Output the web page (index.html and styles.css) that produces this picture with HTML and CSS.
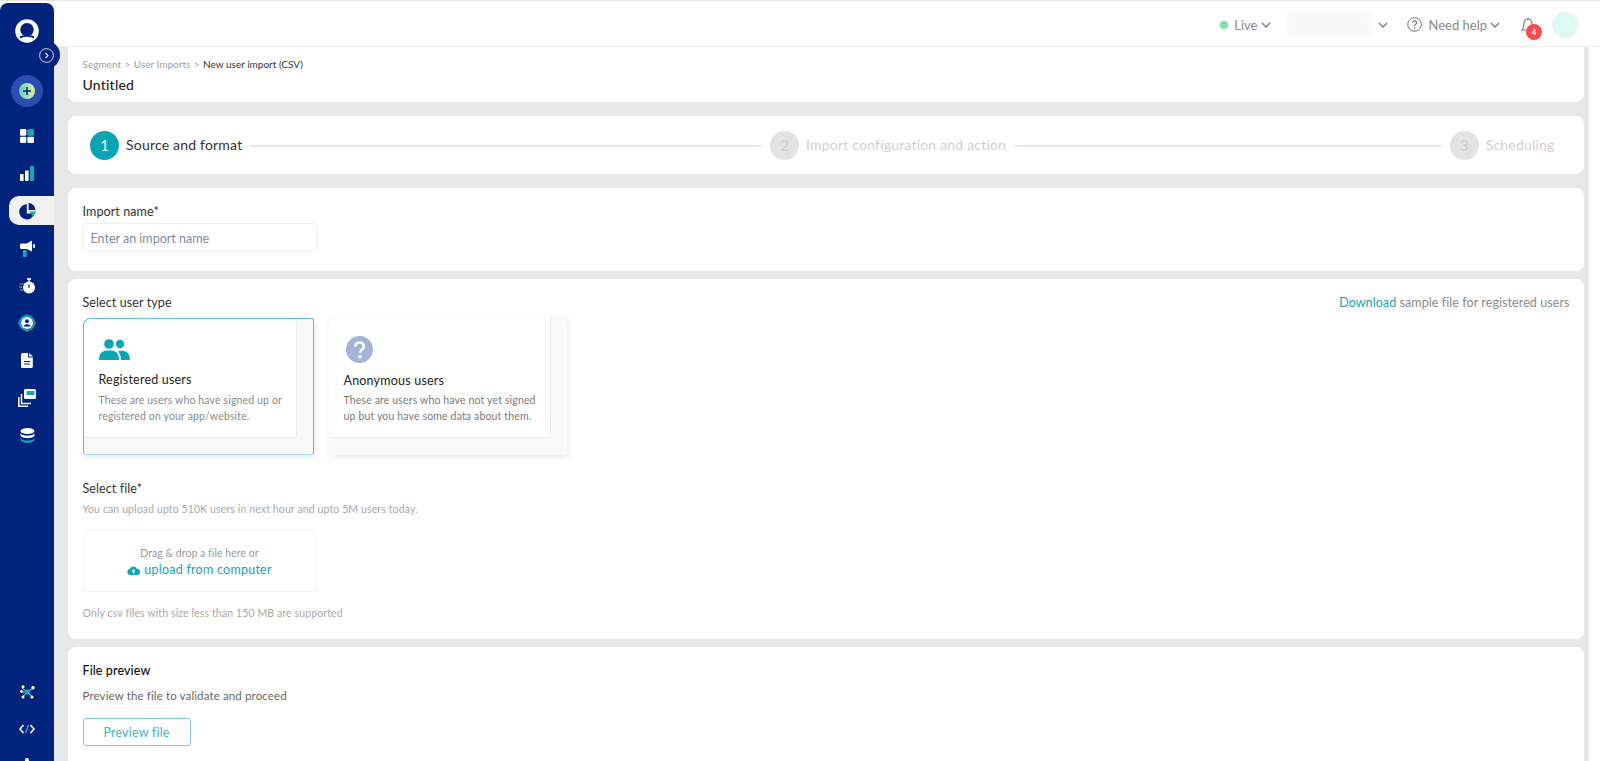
FILE: index.html
```html
<!DOCTYPE html>
<html lang="en">
<head>
<meta charset="utf-8">
<title>New user import</title>
<link rel="stylesheet" href="styles.css">
</head>
<body>
<div class="app">
  <aside class="sidebar">
    <div class="side-top">
      <div class="side-item logo">
        <svg width="24" height="24" viewBox="0 0 24 24"><circle cx="12" cy="12" r="11.800" fill="#fff"/><circle cx="12" cy="10.800" r="6.800" fill="#00247d"/><path d="M5 17.300c3-1.400 11-1.400 14 0v2H5z" fill="#00247d"/><ellipse cx="12" cy="20.500" rx="6.500" ry="2.800" fill="#fff"/></svg>
      </div>
      <button class="toggle" aria-label="Expand"><svg width="15" height="15" viewBox="0 0 15 15" fill="none" stroke="#dfe5f2"><circle cx="7.500" cy="7.500" r="6.900" stroke-width=".9"/><path d="M6.500 5 9 7.500 6.500 10" stroke-width="1.200"/></svg></button>
      <div class="add-wrap"><span class="add"><svg width="16" height="16" viewBox="0 0 18 18"><defs><linearGradient id="g" x1="0" x2="1"><stop offset="0" stop-color="#5fd0c9"/><stop offset="1" stop-color="#e3eea0"/></linearGradient></defs><circle cx="9" cy="9" r="9" fill="url(#g)"/><path d="M9 4.500v9M4.500 9h9" stroke="#00247d" stroke-width="1.700"/></svg></span></div>
      <div class="side-item"><svg width="14" height="14" viewBox="0 0 14 14"><rect width="6.300" height="6.800" rx="1.300" fill="#fff"/><rect x="7.400" width="6.600" height="6.800" rx="1.300" fill="#1ba6b4"/><rect y="7.800" width="6.300" height="6.200" rx="1.300" fill="#fff"/><rect x="7.400" y="7.800" width="6.600" height="6.200" rx="1.300" fill="#fff"/></svg></div>
      <div class="side-item"><svg width="14" height="15" viewBox="0 0 14 15"><rect y="8" width="3.600" height="7" rx=".8" fill="#fff"/><rect x="5" y="4.500" width="3.600" height="10.500" rx=".8" fill="#fff"/><rect x="10" y="0" width="4" height="15" rx=".8" fill="#1ba6b4"/></svg></div>
      <div class="side-item active"><svg width="18" height="18" viewBox="0 0 18 18"><path d="M7.800 2.200a7.600 7.600 0 1 0 7.400 9.400H7.800z" fill="#00247d"/><path d="M9.600 1a7.400 7.400 0 0 1 7 7H9.600z" fill="#00247d"/><path d="M10.500 9.600h6.700l-3 5.200z" fill="#1ba6b4"/></svg></div>
      <div class="side-item"><svg width="15" height="17" viewBox="0 0 15 17"><path d="M1.500 3.500h5.300L12 .5v11L6.800 9H1.500A1.500 1.500 0 0 1 0 7.500V5a1.500 1.500 0 0 1 1.500-1.500z" fill="#fff"/><rect x="13" y="4" width="2" height="4" rx="1" fill="#fff"/><rect x="3" y="10" width="3.600" height="7" rx=".5" fill="#1ba6b4"/></svg></div>
      <div class="side-item"><svg width="16" height="17" viewBox="0 0 16 17"><circle cx="10" cy="10.500" r="6" fill="#fff"/><rect x="8" y="1" width="4" height="1.800" rx=".5" fill="#fff"/><rect x="9.300" y="2" width="1.400" height="3" fill="#fff"/><path d="M10 7.500v3.200" stroke="#00247d" stroke-width="1.300"/><path d="M1 7h3.500M0 10h3M1 13h3.500" stroke="#8fa2d0" stroke-width="1"/></svg></div>
      <div class="side-item"><svg width="18" height="18" viewBox="0 0 18 18"><circle cx="9" cy="9" r="7.200" fill="none" stroke="#1ba6b4" stroke-width="1.800"/><path d="M9 0v2M9 16v2M0 9h2M16 9h2" stroke="#1ba6b4" stroke-width="1.400"/><circle cx="9" cy="9" r="6" fill="#fff"/><circle cx="9" cy="7.300" r="2" fill="#00247d"/><path d="M5.500 12.500c.5-3 6.500-3 7 0z" fill="#00247d"/></svg></div>
      <div class="side-item"><svg width="12" height="15" viewBox="0 0 12 15"><path d="M1.500 0H7v4.500h4.800V13.500a1.500 1.500 0 0 1-1.500 1.500H1.500A1.500 1.500 0 0 1 0 13.500v-12A1.500 1.500 0 0 1 1.500 0z" fill="#fff"/><path d="M8 0l4 3.600H8z" fill="#fff"/><path d="M3 8.500h6M3 11h6" stroke="#00247d" stroke-width="1"/></svg></div>
      <div class="side-item"><svg width="18" height="18" viewBox="0 0 18 18"><rect x="6" y="0" width="12" height="10" rx="1.500" fill="#fff"/><rect x="8.500" y="2" width="8" height="4" fill="#1ba6b4"/><path d="M3.500 5v9.500h9.500M.8 8v9.200H10" fill="none" stroke="#fff" stroke-width="1.500"/></svg></div>
      <div class="side-item"><svg width="15" height="15" viewBox="0 0 15 15"><ellipse cx="7.500" cy="3" rx="7" ry="3" fill="#fff"/><path d="M.5 5c1 3.500 13 3.500 14 0v2.500c-1 3.500-13 3.500-14 0z" fill="#fff"/><path d="M.5 10c1 3.500 13 3.500 14 0v1.500c-1 4.500-13 4.500-14 0z" fill="#1ba6b4"/></svg></div>
    </div>
    <div class="side-bottom">
      <div class="side-item"><svg width="15" height="14" viewBox="0 0 15 14"><g stroke="#fff" stroke-width=".8"><path d="M7.500 7 2 3M7.500 7 13 3M7.500 7l-5 5M7.500 7l5 5M7.500 7H1"/></g><circle cx="3" cy="1.800" r="1.500" fill="#fff"/><circle cx="13" cy="2.800" r="1.700" fill="#fff"/><circle cx="1.500" cy="6.500" r="1.400" fill="#fff"/><circle cx="3" cy="12" r="1.500" fill="#fff"/><circle cx="12" cy="12" r="1.500" fill="#fff"/><circle cx="7.500" cy="7" r="2.800" fill="#1ba6b4"/></svg></div>
      <div class="side-item"><svg width="16" height="10" viewBox="0 0 16 10" fill="none" stroke-width="1.500"><path d="M4.500 1 1 5l3.500 4M11.500 1 15 5l-3.500 4" stroke="#fff"/><path d="M9.500 1 6.500 9" stroke="#1ba6b4"/></svg></div>
      <div class="side-tail"></div>
    </div>
  </aside>

  <div class="main">
    <header class="topbar">
      <span class="env"><i class="dot"></i>Live<svg class="chev" width="10" height="6" viewBox="0 0 10 6"><path d="M1 1l4 4 4-4"/></svg></span>
      <span class="account"><span class="blur"></span><svg class="chev" width="10" height="6" viewBox="0 0 10 6"><path d="M1 1l4 4 4-4"/></svg></span>
      <span class="help"><svg width="15" height="15" viewBox="0 0 15 15" fill="none" stroke="#777"><circle cx="7.500" cy="7.500" r="6.800"/><path d="M5.500 5.800c0-2.700 4.200-2.700 4.200 0 0 1.600-2.100 1.500-2.100 3.200" stroke-width="1.200"/><circle cx="7.600" cy="11" r=".4"/></svg>Need help<svg class="chev" width="10" height="6" viewBox="0 0 10 6"><path d="M1 1l4 4 4-4"/></svg></span>
      <span class="bell"><svg width="14" height="16" viewBox="0 0 14 16" fill="none" stroke="#777" stroke-width="1.100"><path d="M1 13h12c-1.800-1.800-1.500-3.500-1.800-6C10.900 4 9.500 2.200 7 2.200S3.100 4 2.800 7C2.500 9.500 2.800 11.200 1 13z"/><path d="M7 .5v1.700"/></svg><b class="badge">4</b></span>
      <span class="avatar"></span>
    </header>

    <div class="content">
      <section class="card head-card">
        <nav class="crumbs"><span>Segment</span><em>&gt;</em><span>User Imports</span><em>&gt;</em><strong>New user import (CSV)</strong></nav>
        <h1>Untitled</h1>
      </section>

      <section class="card stepper">
        <span class="num on">1</span><span class="step on">Source and format</span><i class="line line-long"></i>
        <span class="num">2</span><span class="step">Import configuration and action</span><i class="line"></i>
        <span class="num">3</span><span class="step">Scheduling</span>
      </section>

      <section class="card name-card">
        <label class="label">Import name*</label>
        <div class="input">Enter an import name</div>
      </section>

      <section class="card form-card">
        <div class="row-between">
          <span class="label">Select user type</span>
          <span class="sample"><a>Download</a> sample file for registered users</span>
        </div>
        <div class="types">
          <div class="type selected">
            <div class="type-in">
              <svg class="type-icon" width="31" height="22" viewBox="0 0 31 22" fill="#09a5b5"><circle cx="10" cy="5" r="4.800"/><circle cx="21" cy="5" r="4.200"/><path d="M0 21c0-8 4-9.500 10-9.500S20 13 20 21z"/><path d="M22 21c0-4-1-6.500-3-8.500 1-.5 2-.7 3.200-.7 5 0 8.800 2 8.800 9.200z"/></svg>
              <h3>Registered users</h3>
              <p>These are users who have signed up or registered on your app/website.</p>
            </div>
          </div>
          <div class="type">
            <div class="type-in">
              <svg class="type-icon" width="27" height="27" viewBox="0 0 27 27"><circle cx="13.500" cy="13.500" r="13.500" fill="#a3b5d6"/><path d="M9.300 10.500c0-5.500 8.500-5.500 8.500 0 0 3.300-3.700 3-3.700 6.300" fill="none" stroke="#fff" stroke-width="2.500"/><circle cx="14" cy="20.700" r="1.700" fill="#fff"/></svg>
              <h3>Anonymous users</h3>
              <p>These are users who have not yet signed up but you have some data about them.</p>
            </div>
          </div>
        </div>
        <div class="label file-label">Select file*</div>
        <p class="hint">You can upload upto 510K users in next hour and upto 5M users today.</p>
        <div class="drop">
          <span class="drop-text">Drag &amp; drop a file here or</span>
          <span class="drop-link"><svg width="13" height="9" viewBox="0 0 13 9"><path d="M3 9a3 3 0 0 1-.4-5.900A4 4 0 0 1 10 2.800 3.100 3.100 0 0 1 10 9z" fill="#09a5b5"/><path d="M6.500 3 4.500 5.200h1.300V7.500h1.400V5.200h1.300z" fill="#fff"/></svg>upload from computer</span>
        </div>
        <p class="hint last">Only csv files with size less than 150 MB are supported</p>
      </section>

      <section class="card preview-card">
        <div class="label strong">File preview</div>
        <p class="sub">Preview the file to validate and proceed</p>
        <button class="btn">Preview file</button>
      </section>
    </div>
  </div>
  <div class="gutter"></div>
</div>
</body>
</html>
```

FILE: styles.css
```css
* { box-sizing: border-box; }
html, body { margin: 0; height: 100%; overflow: hidden; }
body { font-family: Lato, "Open Sans", sans-serif; color: #1c1c1c; background: #fff; }

.app { display: flex; height: 761px; padding-top: 2px; border-top: 1px solid #e6e6e6; }

.sidebar { position: relative; z-index: 2; width: 54px; flex: none; background: #00247d; border-top-right-radius: 8px; border-top-left-radius: 8px; display: flex; flex-direction: column; justify-content: space-between; }
.side-item { height: 37.500px; display: flex; align-items: center; justify-content: center; }
.side-item.logo { height: 56px; }
.side-item.active { margin-left: 9px; width: 45px; height: 29px; margin-top: 4.250px; margin-bottom: 4.250px; background: #f1f1f1; border-radius: 10px 0 0 10px; padding-right: 8px; }
.add-wrap { height: 40px; margin-top: 12px; margin-bottom: 6px; display: flex; justify-content: center; align-items: center; }
.add { width: 32px; height: 32px; border-radius: 50%; background: #2a4db0; display: flex; align-items: center; justify-content: center; }
.toggle { position: absolute; left: 32px; top: 38px; width: 28px; height: 28px; padding: 0; border: 0; border-radius: 50%; background: #00247d; display: flex; align-items: center; justify-content: center; }
.side-bottom { display: flex; flex-direction: column; }
.side-tail { height: 13px; position: relative; }
.side-tail::after { content: ""; position: absolute; left: 25px; top: 10px; width: 4px; height: 3px; background: #fff; border-radius: 2px 2px 0 0; }

.main { flex: 1; min-width: 0; display: flex; flex-direction: column; background: #e8e8e8; }
.gutter { width: 11px; flex: none; background: #fff; }

.topbar { height: 44px; flex: none; margin-right: -11px; background: #fff; border-bottom: 1px solid #f0f0f0; display: flex; align-items: center; justify-content: flex-end; padding-right: 22px; color: #8a8a8a; font-size: 13px; position: relative; z-index: 1; }
.env, .account, .help, .bell { display: flex; align-items: center; }
.env { gap: 5px; margin-right: 16px; }
.env .chev { margin-left: -1px; }
.dot { width: 8px; height: 8px; border-radius: 50%; background: #7fe3a4; margin-right: 1px; }
.chev { fill: none; stroke: #777; stroke-width: 1.300; }
.account { gap: 7px; margin-right: 19px; }
.blur { width: 84px; height: 21px; background: #f7f7f7; filter: blur(2px); }
.help { gap: 3px; margin-right: 21px; }
.help svg:first-child { margin-right: 3px; }
.bell { position: relative; width: 14px; margin-right: 17px; }
.badge { position: absolute; left: 5px; top: 7px; width: 16px; height: 16px; border-radius: 50%; background: #fb4a52; color: #fff; font-size: 8px; line-height: 16px; text-align: center; font-weight: 700; }
.avatar { width: 26px; height: 26px; border-radius: 50%; background: #dff9f2; }

.content { flex: 1; min-height: 0; padding: 0 5px 0 14px; display: flex; flex-direction: column; gap: 14px; }
.card { background: #fff; border-radius: 8px; padding: 0 14.500px; }

.head-card { height: 55px; border-radius: 0 0 8px 8px; padding-top: 11px; }
.crumbs { display: flex; gap: 3.500px; font-size: 10px; line-height: 12px; color: #a0a0a0; }
.crumbs em { font-style: normal; }
.crumbs strong { font-weight: 400; color: #333; }
h1 { margin: 6px 0 0; font-size: 14px; line-height: 18px; font-weight: 500; color: #222; letter-spacing: .2px; }

.stepper { height: 58px; display: flex; align-items: center; padding: 0 29.500px 0 22px; font-size: 14px; }
.num { width: 29px; height: 29px; border-radius: 50%; flex: none; background: #e2e2e2; color: #cdcdcd; display: flex; align-items: center; justify-content: center; font-size: 15px; }
.num.on { background: #09a5b5; color: #fff; }
.step { margin-left: 7px; padding-bottom: 2px; color: #cfcfcf; white-space: nowrap; letter-spacing: .2px; }
.step.on { color: #333; }
.line { flex: 427 1 0; height: 2px; margin: 2px 8px 0; background: #e4e8f3; }
.line-long { flex-grow: 511; }

.name-card { height: 83px; padding-top: 16px; margin-bottom: -6px; }
.label { display: block; font-size: 12.500px; line-height: 16px; color: #333; letter-spacing: .1px; }
.input { margin-top: 3px; width: 234px; height: 29px; border: 1px solid #edf0f6; border-radius: 3px; padding-left: 7px; font-size: 12.500px; line-height: 29px; color: #7f8aa0; }

.form-card { height: 360px; padding-top: 15px; margin-bottom: -6px; }
.row-between { display: flex; justify-content: space-between; align-items: center; height: 17px; }
.sample { font-size: 12.500px; color: #8a8a8a; letter-spacing: .08px; }
.sample a { color: #14a3b3; }
.types { display: flex; gap: 15px; margin-top: 7px; }
.type { width: 238px; height: 137px; background: #f8f8f9; border-radius: 8px 3px 3px 3px; box-shadow: 1px 2px 6px rgba(30,40,70,.1); }
.type.selected { width: 231px; border: 1px solid #5cc0ca; border-bottom-color: #b6e0e5; }
.type-in { height: 120px; background: #fff; border-right: 1px solid #e8ebf0; border-bottom: 1px solid #e8ebf0; border-top-left-radius: 8px; padding: 18px 6px 0 15px; margin-right: 16px; }
.type.selected .type-in { height: 119px; padding-top: 20px; padding-left: 15px; }
.type-icon { display: block; margin-left: 2px; }
.type.selected .type-icon { margin-left: 0; }
h3 { margin: 10px 0 0; font-size: 12.500px; line-height: 16px; font-weight: 400; color: #222; letter-spacing: .2px; }
.type.selected h3 { margin-top: 11px; }
.type p { margin: 3px 0 0; font-size: 10.500px; line-height: 16px; color: #7a7a7a; letter-spacing: .15px; }
.type.selected p { color: #8a8a8a; margin-top: 4px; }

.file-label { margin-top: 26px; }
.hint { margin: 6px 0 0; font-size: 10.500px; line-height: 13px; color: #a8a8a8; letter-spacing: .12px; }
.drop { margin-top: 14px; width: 234px; height: 62px; border: 1px solid #f2f3f6; border-radius: 4px; display: flex; flex-direction: column; align-items: center; justify-content: center; padding-top: 2px; }
.drop-text { font-size: 10.500px; line-height: 16px; color: #9a9a9a; letter-spacing: .05px; }
.drop-link { display: flex; align-items: center; gap: 4px; font-size: 12.500px; line-height: 18px; color: #14a3b3; letter-spacing: .25px; }
.hint.last { margin-top: 15px; }

.preview-card { flex: 1; padding-top: 16px; border-radius: 8px 8px 0 0; }
.strong { font-weight: 500; color: #111; }
.sub { margin: 9px 0 0; font-size: 11.500px; line-height: 15px; color: #666; letter-spacing: .13px; }
.btn { display: block; margin-top: 15px; width: 108px; height: 28px; padding: 0; background: #fff; border: 1px solid #7fcbd3; border-radius: 3px; color: #3fb3bf; font: 12.500px Lato, sans-serif; letter-spacing: .2px; }
```
